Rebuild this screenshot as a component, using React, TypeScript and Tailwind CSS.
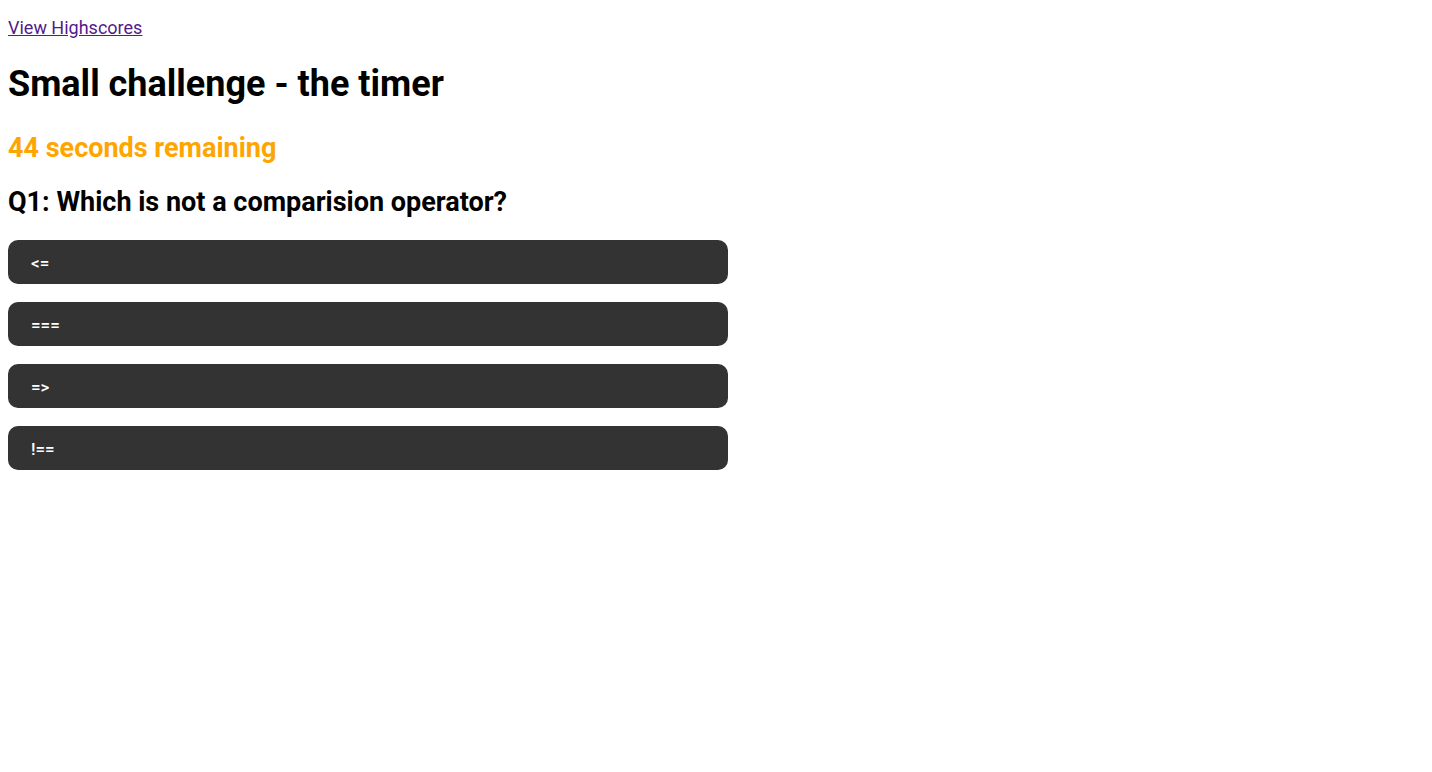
export default function App() {
  const answers = ['<=', '===', '=>', '!=='];

  return (
    <div className="min-h-screen bg-white px-2 pt-[17px] font-['Roboto',sans-serif] text-black">
      <a href="#" className="block text-[18px] leading-[21px] text-[#551a8b] underline w-fit">
        View Highscores
      </a>

      <h1 className="mt-[25px] text-[36px] leading-[42px] font-bold">Small challenge - the timer</h1>

      <h2 className="mt-[27px] text-[27px] leading-[32px] font-bold text-[#ffa500]">44 seconds remaining</h2>

      <h2 className="mt-[22px] text-[27px] leading-[32px] font-bold">Q1: Which is not a comparision operator?</h2>

      <div className="mt-[22px] flex w-[720px] flex-col gap-[18px]">
        {answers.map((a) => (
          <button
            key={a}
            className="h-[44px] rounded-[10px] bg-[#333333] pl-[23px] pt-[3px] text-left text-[17px] font-medium text-white"
          >
            {a}
          </button>
        ))}
      </div>
    </div>
  );
}
